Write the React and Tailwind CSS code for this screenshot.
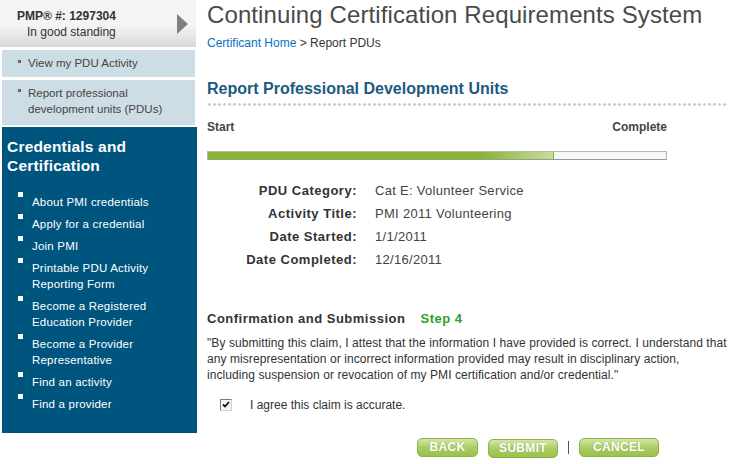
import React from "react";

const credentialLinks = [
  ["About PMI credentials"],
  ["Apply for a credential"],
  ["Join PMI"],
  ["Printable PDU Activity", "Reporting Form"],
  ["Become a Registered", "Education Provider"],
  ["Become a Provider", "Representative"],
  ["Find an activity"],
  ["Find a provider"],
];

const details = [
  ["PDU Category:", "Cat E: Volunteer Service"],
  ["Activity Title:", "PMI 2011 Volunteering"],
  ["Date Started:", "1/1/2011"],
  ["Date Completed:", "12/16/2011"],
];

const GreenButton = ({ label, width }) => (
  <button
    className={`${width} h-[19px] rounded-[5px] border border-[#8db443] bg-gradient-to-b from-[#d3e6a6] via-[#abcd66] to-[#98c14b] text-[12px] font-bold leading-[17px] tracking-[0.3px] text-white [text-shadow:0_0_1px_rgba(90,120,30,0.5)]`}
  >
    {label}
  </button>
);

const Sidebar = () => (
  <aside className="w-[197px] shrink-0">
    <div className="flex h-[47px] w-[196px] items-center justify-between bg-gradient-to-b from-[#f4f4f4] from-[55%] to-[#d8d8d8] pl-[17px] pr-[8px] text-[#333]">
      <div className="text-[12px] leading-[16px]">
        <div className="font-bold">PMP® #: 1297304</div>
        <div className="pl-[10px]">In good standing</div>
      </div>
      <span className="h-0 w-0 border-y-[10px] border-l-[11px] border-y-transparent border-l-[#7f7f7f]" />
    </div>

    <div className="ml-[2px] mt-[3px] flex h-[27px] w-[193px] items-center bg-[#cddde6] pl-[16px] text-[11.5px] text-[#444]">
      <span className="mr-[7px] mt-[-5px] h-[3px] w-[3px] bg-[#666]" />
      View my PDU Activity
    </div>
    <div className="ml-[2px] mt-[3px] flex h-[45px] w-[193px] items-start bg-[#cddde6] pl-[16px] pt-[5px] text-[11.5px] leading-[16px] text-[#444]">
      <span className="mr-[7px] mt-[4px] h-[3px] w-[3px] shrink-0 bg-[#666]" />
      <span>
        Report professional
        <br />
        development units (PDUs)
      </span>
    </div>

    <div className="ml-[2px] mt-[2px] h-[306px] w-[195px] bg-[#00557f] pl-[5px] pt-[10px] text-white">
      <h2 className="text-[15.5px] font-bold leading-[19px] tracking-[0.2px]">
        Credentials and
        <br />
        Certification
      </h2>
      <ul className="mt-[19px] flex flex-col gap-[6px]">
        {credentialLinks.map((lines) => (
          <li key={lines[0]} className="flex items-start text-[11.5px] leading-[16px] tracking-[0.2px]">
            <span className="ml-[11px] mt-[-2px] h-[5px] w-[5px] shrink-0 bg-white" />
            <span className="ml-[9px]">
              {lines.map((l, i) => (
                <div key={i}>{l}</div>
              ))}
            </span>
          </li>
        ))}
      </ul>
    </div>
  </aside>
);

export default function App() {
  return (
    <div className="flex h-[464px] w-[735px] overflow-hidden bg-white font-['Liberation_Sans',Arial,sans-serif] text-[#333]">
      <Sidebar />

      <main className="flex-1 pl-[10px]">
        <h1 className="whitespace-nowrap text-[24px] leading-[30px] tracking-[0.1px] text-[#4a4a4a]">
          Continuing Certification Requirements System
        </h1>
        <div className="mt-[6px] text-[12px] leading-[14px]">
          <a className="text-[#0b72c0]">Certificant Home</a> &gt; Report PDUs
        </div>

        <h2 className="mt-[30px] text-[16px] font-bold leading-[18px] text-[#1b5a80]">
          Report Professional Development Units
        </h2>
        <div className="mr-[7px] mt-[5px] h-[3px] bg-[radial-gradient(circle,#cccccc_1.2px,transparent_1.6px)] bg-[length:5px_3px]" />

        <div className="mt-[14px] flex w-[460px] justify-between text-[12px] font-bold leading-[14px] text-[#444]">
          <span>Start</span>
          <span>Complete</span>
        </div>
        <div className="mt-[17px] flex h-[9px] w-[460px] border border-[#b8b8b8] border-b-[#9a9a9a] bg-[#f7f7f7]">
          <div className="h-full w-[345px] bg-gradient-to-r from-[#8ab532] from-[80%] to-[#c8dd9a]" />
          <div className="h-full w-[1px] bg-[#8ab532]" />
        </div>

        <div className="mt-[19px]">
          {details.map(([k, v]) => (
            <div key={k} className="flex text-[13px] leading-[23px]">
              <div className="w-[150px] text-right font-bold tracking-[0.5px] text-[#333]">{k}</div>
              <div className="ml-[18px] tracking-[0.3px] text-[#444]">{v}</div>
            </div>
          ))}
        </div>

        <div className="mt-[40px] text-[13px] font-bold leading-[16px] tracking-[0.5px]">
          Confirmation and Submission <span className="ml-[11px] text-[#2aa22a]">Step 4</span>
        </div>
        <p className="mt-[8px] whitespace-nowrap text-[12px] leading-[16px] tracking-[0.07px] text-[#333]">
          "By submitting this claim, I attest that the information I have provided is correct. I understand that
          <br />
          any misrepresentation or incorrect information provided may result in disciplinary action,
          <br />
          including suspension or revocation of my PMI certification and/or credential."
        </p>

        <div className="ml-[13px] mt-[15px] flex items-center text-[12px] leading-[14px]">
          <span className="flex h-[12px] w-[12px] items-center justify-center border border-[#7a7a7a] border-b-[#d0d0d0] border-r-[#d0d0d0] bg-[#f6f6f6]">
            <svg width="8" height="8" viewBox="0 0 8 8">
              <path d="M1 3.5 L3 5.5 L7 1" fill="none" stroke="#111" strokeWidth="1.8" />
            </svg>
          </span>
          <span className="ml-[18px]">I agree this claim is accurate.</span>
        </div>

        <div className="ml-[210px] mt-[23px] flex items-center">
          <GreenButton label="BACK" width="w-[61px]" />
          <span className="ml-[10px]">
            <GreenButton label="SUBMIT" width="w-[70px]" />
          </span>
          <span className="mx-[10px] h-[13px] w-[1px] bg-[#555]" />
          <GreenButton label="CANCEL" width="w-[80px]" />
        </div>
      </main>
    </div>
  );
}
